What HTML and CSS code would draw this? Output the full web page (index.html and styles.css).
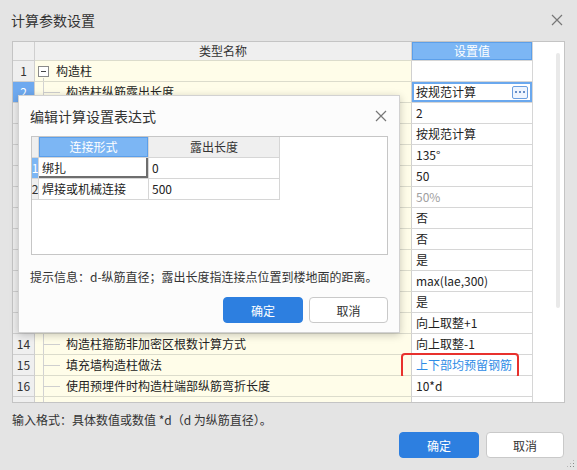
FILE: index.html
```html
<!DOCTYPE html>
<html lang="zh">
<head>
<meta charset="utf-8">
<title>计算参数设置</title>
<link rel="stylesheet" href="styles.css">
</head>
<body>
<div class="window">
  <div class="titlebar">
    <span class="title">计算参数设置</span>
    <svg class="close" width="12" height="12" viewBox="0 0 12 12"><path d="M1 1L11 11M11 1L1 11" stroke="#777" stroke-width="1.2" fill="none"/></svg>
  </div>
  <div class="grid">
    <div class="cols">
      <div class="row head"><div class="c num"></div><div class="c name center">类型名称</div><div class="c val vhead">设置值</div></div>
      <div class="row"><div class="c num">1</div><div class="c name root"><span class="minus"></span>构造柱</div><div class="c val"></div></div>
      <div class="row"><div class="c num selnum">2</div><div class="c name child">构造柱纵筋露出长度</div><div class="c val selval"><span>按规范计算</span><span class="more"><i></i><i></i><i></i></span></div></div>
      <div class="row"><div class="c num"></div><div class="c name child"></div><div class="c val">2</div></div>
      <div class="row"><div class="c num"></div><div class="c name child"></div><div class="c val">按规范计算</div></div>
      <div class="row"><div class="c num"></div><div class="c name child"></div><div class="c val">135°</div></div>
      <div class="row"><div class="c num"></div><div class="c name child"></div><div class="c val">50</div></div>
      <div class="row"><div class="c num"></div><div class="c name child"></div><div class="c val dim">50%</div></div>
      <div class="row"><div class="c num"></div><div class="c name child"></div><div class="c val">否</div></div>
      <div class="row"><div class="c num"></div><div class="c name child"></div><div class="c val">否</div></div>
      <div class="row"><div class="c num"></div><div class="c name child"></div><div class="c val">是</div></div>
      <div class="row"><div class="c num"></div><div class="c name child"></div><div class="c val">max(lae,300)</div></div>
      <div class="row"><div class="c num"></div><div class="c name child"></div><div class="c val">是</div></div>
      <div class="row"><div class="c num"></div><div class="c name child"></div><div class="c val">向上取整+1</div></div>
      <div class="row"><div class="c num">14</div><div class="c name child">构造柱箍筋非加密区根数计算方式</div><div class="c val">向上取整-1</div></div>
      <div class="row"><div class="c num">15</div><div class="c name child">填充墙构造柱做法</div><div class="c val link"><span class="mark"></span>上下部均预留钢筋</div></div>
      <div class="row"><div class="c num">16</div><div class="c name child">使用预埋件时构造柱端部纵筋弯折长度</div><div class="c val">10*d</div></div>
      <div class="row"><div class="c num"></div><div class="c name child"></div><div class="c val"></div></div>
    </div>
    <div class="filler"><div class="thumb"></div></div>
  </div>
  <div class="hint">输入格式：具体数值或数值 *d（d 为纵筋直径）。</div>
  <div class="actions">
    <button class="btn primary ok">确定</button>
    <button class="btn cancel">取消</button>
  </div>
</div>

<div class="modal">
  <div class="mtitle">
    <span>编辑计算设置表达式</span>
    <svg class="mclose" width="12" height="12" viewBox="0 0 12 12"><path d="M1 1L11 11M11 1L1 11" stroke="#777" stroke-width="1.2" fill="none"/></svg>
  </div>
  <div class="mgrid">
    <div class="mrow mhead"><div class="m mnum"></div><div class="m c1 bluehead">连接形式</div><div class="m c2 grayhead">露出长度</div></div>
    <div class="mrow"><div class="m mnum bluenum">1</div><div class="m c1 focus">绑扎</div><div class="m c2">0</div></div>
    <div class="mrow"><div class="m mnum">2</div><div class="m c1">焊接或机械连接</div><div class="m c2">500</div></div>
  </div>
  <div class="mhint">提示信息：d-纵筋直径；露出长度指连接点位置到楼地面的距离。</div>
  <div class="mactions">
    <button class="btn primary">确定</button>
    <button class="btn mcancel">取消</button>
  </div>
</div>
<div class="grip"></div>
</body>
</html>
```

FILE: styles.css
```css
body {
  margin: 0;
  width: 577px;
  height: 470px;
  overflow: hidden;
  position: relative;
  background: #e4e4e4;
  font-family: "Noto Sans CJK SC", "Microsoft YaHei", sans-serif;
  font-size: 12px;
  color: #222;
}

.window {
  display: flex;
  flex-direction: column;
  height: 470px;
}

.titlebar {
  height: 41px;
  box-sizing: border-box;
  display: flex;
  align-items: center;
  justify-content: space-between;
  padding: 0 14px 0 11px;
}

.title {
  font-size: 14px;
  color: #333;
  margin-top: -1px;
}

.close { margin-top: -1px; }

.grid {
  display: flex;
  margin-left: 12px;
  width: 553px;
  height: 362px;
  box-sizing: border-box;
  border: 1px solid #c4c4c4;
  background: #fff;
  overflow: hidden;
}

.cols { width: 520px; flex: none; }

.row { display: flex; height: 21px; }
.row.head { height: 19px; }

.c {
  box-sizing: border-box;
  height: 100%;
  border-right: 1px solid #d6d6d6;
  border-bottom: 1px solid #d6d6d6;
  display: flex;
  align-items: center;
  white-space: nowrap;
  overflow: hidden;
  line-height: 20px;
}

.num {
  width: 22px;
  justify-content: center;
  background: #efefef;
  color: #333;
  border-color: #cfcfcf;
}

.name {
  width: 377px;
  background: #fffde9;
  border-right-color: #d0d0d0;
  border-bottom-color: #dcdccc;
  position: relative;
  padding-left: 31px;
}

.head .c { background: #efefef; color: #333; }
.head .name { padding-left: 0; }
.center { justify-content: center; }

.val {
  width: 121px;
  background: #fff;
  padding-left: 4px;
  position: relative;
  overflow: visible;
}

.head .vhead {
  background: #7cb6f4;
  color: #fff;
  justify-content: center;
  padding-left: 0;
  box-shadow: inset 0 0 0 1px #5b9fea;
}

.root { padding-left: 3px; }
.minus {
  width: 11px;
  height: 11px;
  box-sizing: border-box;
  border: 1px solid #8a8a8a;
  background: #fff;
  margin-right: 7px;
  position: relative;
}
.minus::after {
  content: "";
  position: absolute;
  left: 2px;
  top: 4px;
  width: 5px;
  height: 1px;
  background: #444;
}
.root::before {
  content: "";
  position: absolute;
  left: 8px;
  top: 17px;
  bottom: -1px;
  width: 1px;
  background: #cfcfcf;
}

.child::before {
  content: "";
  position: absolute;
  left: 8px;
  top: 0;
  bottom: -1px;
  width: 1px;
  background: #d2d2d2;
}
.child::after {
  content: "";
  position: absolute;
  left: 8px;
  top: 10px;
  width: 17px;
  height: 1px;
  background: #cfcfcf;
}

.selnum { background: #6ea9ef; color: #fff; }

.selval {
  box-shadow: inset 0 0 0 2px #6aa8ee;
  justify-content: space-between;
  padding-right: 4px;
}

.more {
  width: 16px;
  height: 13px;
  box-sizing: border-box;
  border: 1px solid #6b9fe0;
  border-radius: 2px;
  background: #eef5ff;
  display: flex;
  align-items: center;
  justify-content: center;
  gap: 2px;
}
.more i {
  width: 2px;
  height: 2px;
  background: #3a6cb5;
  border-radius: 1px;
}

.dim { color: #a0a0a0; }
.link { color: #2e8ce6; }

.mark {
  position: absolute;
  left: -11px;
  top: -2px;
  width: 118px;
  height: 26px;
  box-sizing: border-box;
  border: 2px solid #e8312d;
  border-radius: 4px;
}

.filler {
  flex: 1;
  position: relative;
}
.thumb {
  margin: 11px 0 0 23px;
  width: 4px;
  height: 255px;
  background: #e9e9e9;
  border-radius: 2px;
}

.hint {
  margin-top: 8px;
  padding-left: 12px;
  line-height: 18px;
  color: #333;
}

.actions {
  margin-top: 3px;
  display: flex;
  justify-content: flex-end;
  gap: 7px;
  padding-right: 13px;
}

.btn {
  width: 80px;
  height: 26px;
  box-sizing: border-box;
  border: 1px solid #c9c9c9;
  border-radius: 4px;
  background: #fff;
  color: #333;
  font-family: inherit;
  font-size: 12px;
  padding: 0;
}
.btn.primary {
  background: #2d7fe0;
  border-color: #2d7fe0;
  color: #fff;
}
.btn.cancel { width: 78px; }

/* modal */
.modal {
  position: absolute;
  left: 18px;
  top: 95px;
  width: 382px;
  height: 238px;
  box-sizing: border-box;
  background: #fcfcfc;
  border: 1px solid #d2d2d2;
  box-shadow: 0 2px 8px rgba(0, 0, 0, 0.22);
  display: flex;
  flex-direction: column;
}

.mtitle {
  height: 40px;
  display: flex;
  align-items: center;
  justify-content: space-between;
  padding: 0 12px 0 11px;
  font-size: 14px;
  color: #333;
}

.mgrid {
  margin: 0 11px 0 12px;
  height: 119px;
  box-sizing: border-box;
  border: 1px solid #c6c6c6;
  background: #fff;
}

.mrow { display: flex; height: 21px; }

.m {
  box-sizing: border-box;
  height: 100%;
  border-right: 1px solid #d6d6d6;
  border-bottom: 1px solid #d6d6d6;
  display: flex;
  align-items: center;
  white-space: nowrap;
  overflow: hidden;
  line-height: 20px;
}

.mnum {
  width: 7px;
  justify-content: center;
  background: #efefef;
  color: #333;
}
.c1 { width: 110px; padding-left: 3px; }
.c2 { width: 131px; padding-left: 3px; }

.bluehead {
  background: #7cb6f4;
  color: #fff;
  justify-content: center;
  padding-left: 0;
  box-shadow: inset 0 0 0 1px #5b9fea;
}
.grayhead {
  background: #efefef;
  color: #333;
  justify-content: center;
  padding-left: 0;
}
.bluenum { background: #7cb6f4; color: #fff; }

.focus { box-shadow: inset -2px -2px 0 #6e6e6e; }

.mhint {
  margin-top: 13px;
  padding-left: 11px;
  line-height: 18px;
  color: #333;
}

.mactions {
  margin-top: 11px;
  display: flex;
  justify-content: flex-end;
  gap: 6px;
  padding-right: 11px;
}
.mcancel { width: 79px; }

.grip {
  position: absolute;
  right: 2px;
  bottom: 2px;
  width: 9px;
  height: 9px;
  background-image: radial-gradient(circle, #8a8a8a 0.8px, transparent 1px);
  background-size: 3px 3px;
  clip-path: polygon(100% 0, 100% 100%, 0 100%);
}
```
